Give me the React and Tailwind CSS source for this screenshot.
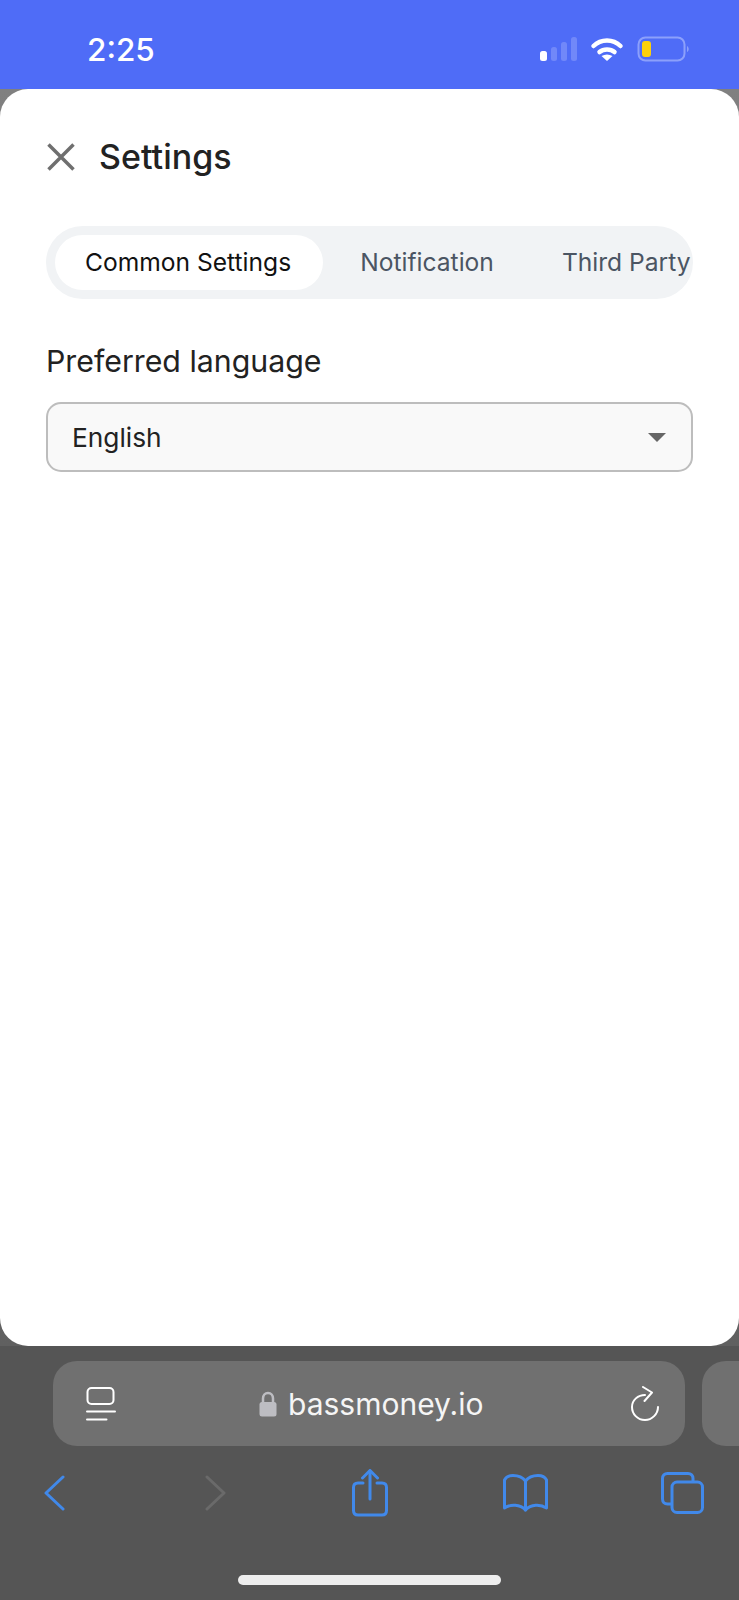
const StatusIcons = () => (
  <svg width="150" height="26" viewBox="0 0 150 26" fill="none">
    {/* signal */}
    <rect x="0" y="15" width="7" height="10" rx="2.5" fill="#fff" />
    <rect x="11" y="11" width="6" height="14" rx="2.5" fill="#7188f9" />
    <rect x="21" y="6" width="6" height="19" rx="2.5" fill="#7188f9" />
    <rect x="31" y="1" width="6" height="24" rx="2.5" fill="#7188f9" />
    {/* wifi */}
    <path d="M53.500 10C61 2.500 73 2.500 80.500 10" stroke="#fff" strokeWidth="4.500" strokeLinecap="round" />
    <path d="M59.500 16C63.500 12.500 70.500 12.500 74.500 16" stroke="#fff" strokeWidth="4.500" strokeLinecap="round" />
    <path d="M67 25L61.500 20C65 18 69 18 72.500 20Z" fill="#fff" />
    {/* battery */}
    <rect x="98.500" y="1.500" width="46" height="23" rx="7" stroke="#8ca0fb" strokeWidth="2" />
    <rect x="102" y="5" width="9" height="16" rx="3" fill="#fcd00c" />
    <path d="M147 10C149 11 149.500 15 147 16Z" fill="#8ca0fb" />
  </svg>
);

const TabsIcon = () => (
  <svg width="30" height="34" viewBox="0 0 30 34" fill="none" stroke="#fff" strokeWidth="2" strokeLinecap="round">
    <rect x="1.500" y="1" width="26" height="16" rx="4" />
    <path d="M1 24.500H29" />
    <path d="M1 32.500H20.500" />
  </svg>
);

const LockIcon = () => (
  <svg width="18" height="26" viewBox="0 0 18 26" fill="none">
    <path d="M4 12V7.500C4 4.500 6 2 9 2C12 2 14 4.500 14 7.500V12" stroke="#bdbdc2" strokeWidth="2.500" />
    <rect x="0.500" y="11" width="17" height="14.500" rx="2.500" fill="#bdbdc2" />
  </svg>
);

const ReloadIcon = () => (
  <svg width="30" height="36" viewBox="0 0 30 36" fill="none" stroke="#fff" strokeWidth="2" strokeLinecap="round" strokeLinejoin="round">
    <path d="M15 9C8 9 2 14 2 21C2 28 7.500 34 15 34C22 34 28 28 28 21" />
    <path d="M13 1L22 6.500L14.500 15" />
  </svg>
);

const Chevron = ({ color, flip }) => (
  <svg width="21" height="36" viewBox="0 0 21 36" fill="none" stroke={color} strokeWidth="3" strokeLinecap="round" strokeLinejoin="round">
    <path d={flip ? "M2 2L19 18L2 34" : "M19 2L2 18L19 34"} />
  </svg>
);

const ShareIcon = () => (
  <svg width="36" height="48" viewBox="0 0 36 48" fill="none" stroke="#4189ea" strokeWidth="3" strokeLinecap="round" strokeLinejoin="round">
    <path d="M11 14H6C3 14 1.500 15.500 1.500 18.500V41.500C1.500 44.500 3 46 6 46H30C33 46 34.500 44.500 34.500 41.500V18.500C34.500 15.500 33 14 30 14H25" />
    <path d="M18 30V2" />
    <path d="M10.500 9L18 1.500L25.500 9" />
  </svg>
);

const BookIcon = () => (
  <svg width="45" height="38" viewBox="0 0 45 38" fill="none" stroke="#4189ea" strokeWidth="3" strokeLinecap="round" strokeLinejoin="round">
    <path d="M22.500 7C19.500 3 15 1.500 10 1.500C6.500 1.500 3 3 1.500 6V34C7.500 30 17 30 22.500 36C28 30 37.500 30 43.500 34V6C42 3 38.500 1.500 35 1.500C30 1.500 25.500 3 22.500 7Z" />
    <path d="M22.500 7V36" />
  </svg>
);

const PagesIcon = () => (
  <svg width="43" height="42" viewBox="0 0 43 42" fill="none" stroke="#4189ea" strokeWidth="3" strokeLinejoin="round">
    <path d="M32 10V6.500C32 3.500 30 1.500 27 1.500H6.500C3.500 1.500 1.500 3.500 1.500 6.500V27C1.500 30 3.500 32 6.500 32H11" />
    <rect x="11" y="10" width="30.500" height="30.500" rx="5" />
  </svg>
);

export default function App() {
  return (
    <div className="flex flex-col h-[1600px] w-[739px] overflow-hidden bg-[#555555] font-['Inter',sans-serif]">
      {/* status bar */}
      <div className="flex items-center justify-between h-[89px] bg-[#4f6cf7] pl-[87px] pr-[49px] pt-[10px] text-white">
        <span className="text-[31.5px] leading-none font-medium">2:25</span>
        <div className="-mt-[1px]"><StatusIcons /></div>
      </div>

      {/* sheet */}
      <div className="h-[1257px] bg-linear-to-b from-[#808080] to-[#606060]">
        <div className="h-full bg-white rounded-[28px] px-[46px] pt-[40px]">
          <div className="flex items-center gap-[24px] h-[56px] pl-[1px]">
            <svg width="28" height="28" viewBox="0 0 28 28" fill="none" stroke="#6f6f6f" strokeWidth="3.500">
              <path d="M1.500 1.500L26.500 26.500M26.500 1.500L1.500 26.500" />
            </svg>
            <span className="text-[34px] leading-none font-medium text-[#222222]">Settings</span>
          </div>

          <div className="h-[73px] mt-[41px] pl-[9px] flex items-center gap-[5px] rounded-full bg-[#f1f3f5] overflow-hidden whitespace-nowrap text-[24.6px]">
            <div className="flex items-center h-[55px] pl-[30px] pr-[32px] rounded-full bg-white text-[#111111]">Common Settings</div>
            <div className="pl-[32px] pr-[31px] text-[#4b5563]">Notification</div>
            <div className="pl-[32px] text-[#4b5563]">Third Party</div>
          </div>

          <div className="mt-[44px] text-[30.3px] leading-[36px] text-[#222222]">Preferred language</div>

          <div className="mt-[23px] flex items-center justify-between h-[70px] pl-[24px] pr-[25px] rounded-[15px] border-2 border-[#bdbdbd] bg-[#f9f9f9]">
            <span className="pt-[2px] text-[26.300px] text-[#222222]">English</span>
            <div className="w-0 h-0 border-x-[9px] border-x-transparent border-t-[9px] border-t-[#666666]"></div>
          </div>
        </div>
      </div>

      {/* safari bar */}
      <div className="flex-1 relative">
        <div className="flex mt-[15px] gap-[17px] pl-[53px]">
          <div className="flex items-center shrink-0 w-[632px] h-[85px] pl-[33px] pr-[25px] rounded-[24px] bg-[#707070]">
            <TabsIcon />
            <div className="flex items-center gap-[11px] ml-[143px] flex-1">
              <LockIcon />
              <span className="pt-[1px] text-[30px] leading-none text-[#f5f5f5]">bassmoney.io</span>
            </div>
            <ReloadIcon />
          </div>
          <div className="shrink-0 w-[60px] h-[85px] rounded-[24px] bg-[#707070]"></div>
        </div>

        <div className="flex items-center h-[50px] mt-[22px] pl-[44px]">
          <Chevron color="#4189ea" />
          <div className="ml-[140px]"><Chevron color="#6a6a6a" flip /></div>
          <div className="ml-[126px] -mt-[1px]"><ShareIcon /></div>
          <div className="ml-[115px]"><BookIcon /></div>
          <div className="ml-[113px]"><PagesIcon /></div>
        </div>

        <div className="absolute left-[238px] top-[229px] w-[263px] h-[10px] rounded-full bg-[#eeeeee]"></div>
      </div>
    </div>
  );
}
